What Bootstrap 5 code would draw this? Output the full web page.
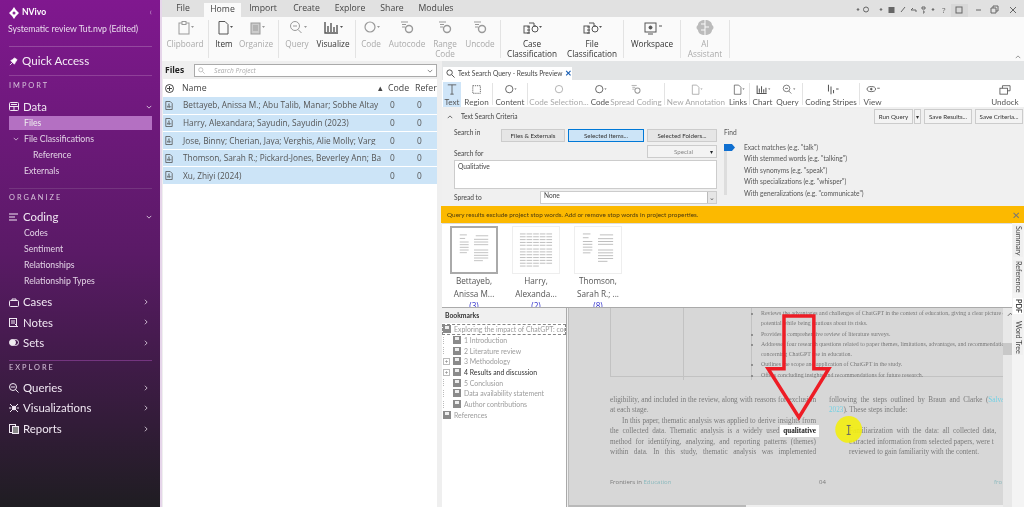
<!DOCTYPE html>
<html lang="en"><head><meta charset="utf-8"><title>NVivo</title>
<link rel="stylesheet" href="https://cdn.jsdelivr.net/npm/bootstrap@5.3.0/dist/css/bootstrap.min.css">
<style>
html,body{height:507px;overflow:hidden;background:#fff}
body{font-family:"Open Sans","Noto Sans",sans-serif;font-size:8.2px;color:#444;line-height:1.2}
.shot{width:1024px;height:507px;overflow:hidden;position:relative;filter:blur(.35px)}
svg{display:block;fill:none;stroke:currentColor;stroke-width:1}
/* sidebar */
.sb{width:160px;flex:none;height:507px;padding:0 8px 0 9px;background:linear-gradient(#80188f 0,#5a1a66 50%,#1f1d22 100%);color:#e9dcec;font-family:Lato,sans-serif}
.sb-head{height:47px;padding-top:5px;border-bottom:1px solid #94489f}
.brand{height:15px;font-weight:700;font-size:8.6px;color:#fff;margin-left:-1px;gap:2px}
.ptitle{font-size:8.7px;white-space:nowrap;margin-top:4px;margin-left:-1px;color:#eadcee}
.sb-q{height:29px;font-size:11.6px;color:#f4ecf5;border-bottom:1px solid #8f4099;gap:4px}
.sb-l{font-size:7.4px;letter-spacing:2px;color:#d7c4db;display:flex;align-items:center}
.h21{height:21px}.h18{height:18px}.h16{height:16px}
.sb-m{font-size:11.4px;color:#f1e8f3;gap:4px;height:18px;padding-top:1px}
.sb-m.t20{height:20.3px;padding-top:0}
.sb-m>span{flex:1}
.sb-s{height:16px;font-size:8.7px;padding-left:15px;color:#e3d3e6;display:flex;align-items:center}
.sb-s.on{background:#b470c2;height:14px;margin:1px 0;color:#eee}
.sb-s.d2{padding-left:24px}
.sb-s.ex{padding-left:4px;gap:5px}
.sb-r{border-top:1px solid #74357f}
.mt9{margin-top:9px}.mt3x{margin-top:3px}.mt7{margin-top:7px}.mt1x{margin-top:1px}
/* top */
.mainp{flex:1;min-width:0;height:507px;border-left:2px solid #e6d5ea;background:#efefef}
.strip{height:17px;background:#e1e1e1;font-size:8.7px;color:#444}
.tb{text-align:center;padding-top:3px;flex:none}
.tb.on{background:#fafafa;margin-top:3px;height:14px;padding-top:1px}
.rib{height:44px;background:#fafafa;position:relative}
.ri{display:flex;flex-direction:column;align-items:center;text-align:center;font-size:8.2px;line-height:10px;color:#aaa;padding-top:3px;flex:none}
.ri svg{height:15px;width:22px;margin-bottom:4px;color:#999}
.ri.en{color:#333}.ri.en svg{color:#555}
.rs{width:1px;background:#e3e3e3;margin:3px 0 3px;flex:none}
.w1{width:1px}.w2{width:2px}.w4{width:4px}.w5{width:5px}.w7{width:7px}.w18{width:18px}.w20{width:20px}.w22{width:22px}.w25{width:25px}
.w30{width:30px}.w31{width:31px}.w34{width:34px}.w36{width:36px}.w37{width:37px}.w39{width:39px}.w40{width:40px}.w42{width:42px}.w43{width:43px}.w44{width:44px}.w46{width:46px}.w48{width:48px}.w52{width:52px}.w56{width:56px}.w58{width:58px}.w62{width:62px}
.chev{position:absolute;right:3px;bottom:2px;color:#777}
/* work */
.work{height:446px;padding-left:1px}
.fp{width:274px;flex:none;height:446px;background:#fff}
.fp-h{height:18px;background:#efefef;padding-left:2px;gap:10px;padding-top:1px}
.fp-h b{font-size:8.5px;color:#222}
.fsearch{flex:1;height:13px;background:#fff;border:1px solid #aaa;font-style:italic;color:#aaa;font-size:6.6px;padding:0 3px;gap:9px}
.fsearch svg:last-child{margin-left:auto;color:#666}
.thd{height:18px;font-size:8.8px;color:#444}
.c0{width:19px;flex:none;padding-left:2px}
.cn{flex:1;overflow:hidden;white-space:nowrap;min-width:0}
.cc{width:27px;flex:none;padding-left:3px}
.cr{width:23px;flex:none;padding-left:1px}
.thd .cc{padding-left:1px}
.trow{height:16.6px;margin-bottom:1px;background:#cce4f7;font-size:8.3px;color:#555}
.trow .cn{padding-left:1px}
.trow .cr{padding-left:3px}
.gapx{width:5px;flex:none}
.rp{flex:1;min-width:0;height:446px}
.rtabs{height:19px;background:#e3e5e6;padding:6px 0 0 1px}
.rtab{width:129px;height:13px;background:#fff;font-family:Lato,sans-serif;font-size:6.6px;color:#444;gap:3px;padding:0 3px;white-space:nowrap}
.rtab svg{flex:none}
.rtab i{margin-left:auto;font-style:normal;color:#1a5fb4;font-weight:700;font-size:8px}
.tool{height:27px;background:#fff}
.ti{display:flex;flex-direction:column;align-items:center;font-family:Lato,sans-serif;font-size:8.1px;line-height:10px;color:#aaa;padding-top:2px;height:25px;margin-top:2px;white-space:nowrap;flex:none}
.ti svg{width:20px;height:13px;margin-bottom:2px;color:#999}
.ti.en{color:#555}.ti.en svg{color:#555}
.ti.sel{background:#cfe5f8;color:#555}
.ts{width:1px;background:#e3e3e3;height:22px;margin-top:3px;flex:none}
.crit{height:99px;background:#f0f0f0;display:grid;grid-template-columns:12px 47px 39px 177px 7px 300px;grid-template-rows:17px 5px 13px 3px 13px 2px 29px 2px 13px 2px;font-family:Lato,sans-serif;font-size:6.6px;color:#444}
.crit>*{min-width:0}
.g-top{grid-column:1/-1;grid-row:1;display:flex;align-items:center;padding:2px 1px 0 5px}
.btnx{border:1px solid #ccc;background:#e6e6e6;font-size:6.2px;color:#333;padding:0;height:13px;text-align:center;border-radius:0;line-height:11px;display:block;white-space:nowrap;font-family:inherit;flex:none}
.btnw{background:#f3f3f3;border-color:#ccc;height:15px}
.bsel{background:#cce4f7;border-color:#0078d7}
.m3{margin-left:3px}.m1{margin-left:1px}
.cell-in{grid-area:3/2}.cell-btn{grid-area:3/3/auto/5}.cell-for{grid-area:5/2;align-self:end}.cell-sp{grid-area:5/3/auto/5}.cell-tx{grid-area:7/2/auto/5}.cell-st{grid-area:9/2;align-self:center}.cell-sl{grid-area:9/4}
.sbtns{display:grid;grid-template-columns:64px 76px 70px;column-gap:3px}
.btnsp{width:70px;height:13px;background:#f3f3f3;color:#888;padding:0 3px 0 26px}
.txa{border:1px solid #ccc;background:#fff;padding:2px 3px}
.sel2{background:#fff;border:1px solid #ccc;padding-left:3px;position:relative}
.sel2 em{position:absolute;right:0;top:0;bottom:0;width:9px;background:#e6e6e6;border-left:1px solid #bbb;display:flex;align-items:center;justify-content:center;font-style:normal;color:#555}
.find{grid-column:6;grid-row:3/10;position:relative;color:#555}
.track{position:absolute;left:0;top:16px;width:3px;height:50px;background:#ddd}
.knob{position:absolute;left:0;top:15px;width:11px;height:7px;background:#0f6fd0;clip-path:polygon(0 0,72% 0,100% 50%,72% 100%,0 100%)}
.opts{padding-left:20px;padding-top:1px;line-height:11.5px;white-space:nowrap}
.warn{height:17px;background:#fcb900;font-family:Lato,sans-serif;font-size:6.4px;color:#4a3a10;padding:0 4px 0 6px;margin-left:-1px}
.thumbs{height:85px;background:#fff;border-top:1px solid #ddd;overflow:hidden;padding:2px 0 0 1px;border-bottom:1px solid #aaa;flex:none}
.tc{width:62px;text-align:center;font-size:8.2px;line-height:12.5px;color:#555;flex:none;white-space:nowrap}
.pg{width:48px;height:48px;margin:0 auto 1px;padding:4px 6px;border:1px solid #eee;color:#aaa;background:#fff}
.pg.on{border:2px solid #aaa}
.pg svg{width:100%;height:100%;stroke-width:.8}
.tc a{color:#33c;text-decoration:none;display:block}
.lower{height:199px}
.bm{width:125px;flex:none;background:#fff;border-right:1px solid #aaa;margin-right:1px;font-family:Lato,sans-serif;font-size:6.9px;color:#9c9c9c;white-space:nowrap;overflow:hidden}
.bm-h{height:15px;background:#f0f0f0;font-weight:700;color:#333;padding-left:3px;font-size:6.8px;margin-bottom:1px}
.bi{height:10.7px;display:flex;align-items:center;gap:3px;padding-left:1px;flex:none}
.bi u{width:8px;height:8px;background:#8a8a8a;display:block;flex:none;position:relative}
.bi u::after{content:"";position:absolute;left:2px;top:1px;width:4px;height:3px;background:#eee}
.bi s{width:7px;height:7px;flex:none;font-size:6px;line-height:7px;text-decoration:none;color:#777;text-align:center;border-left:1px dotted #bbb}
.bi s.pl{border:1px solid #bbb;line-height:5px}
.bi.dk{color:#333}
.bi.fst{outline:1px dashed #888;outline-offset:-1px}
.pdf{flex:1;min-width:0;background:#d7d7d7;position:relative;overflow:hidden;font-family:"Liberation Serif",serif;color:#7a7a7a;font-size:7.2px;border-left:1px solid #bbb}
.pt{display:grid;grid-template-columns:73px 68px 1fr;height:69px;margin:0 0 0 41px;border:1px solid #c2c2c2;border-top:0;width:395px}
.pt>div{border-right:1px solid #c2c2c2}
.pt ul{margin:0;padding:0 0 0 9px;font-size:5.9px;line-height:10.3px;white-space:nowrap;list-style:disc}
.cols{margin:18px 0 0 41px;gap:13px;line-height:10.4px;width:440px}
.cols>div{flex:none}
.lc{width:206px}.rc{width:200px;white-space:nowrap}
.j{text-align:justify;text-align-last:justify;display:block;white-space:nowrap;height:10.4px}
.ind{padding-left:12px}
.ind2{padding-left:20px}
.wsp{word-spacing:1.7px}
.hi{background:#fff;color:#222;display:inline-block;padding:0 3px;margin:-1px -3px;line-height:12px;font-weight:700;font-size:7.2px}
.foot{margin:22px 0 0 41px;font-family:"Open Sans",sans-serif;font-size:6px;width:430px}
.foot span{color:#8ab9bd}
.f1{width:209px;flex:none}.f2{width:175px;flex:none}
.overlay{position:absolute;inset:0;pointer-events:none}
.vsb{width:9px;background:#e8e8e8;flex:none;color:#555}
.vsb b{display:block;height:12px;background:#c8c8c8;margin-top:26px}
.rstrip{width:12px;background:#f4f4f4;flex:none;font-family:Lato,sans-serif;font-size:7.2px;color:#444;display:flex;flex-direction:column;padding-top:2px;gap:3px;align-items:center}
.rstrip span{writing-mode:vertical-rl;white-space:nowrap;background:#f0f0f0;padding:1px}
.rstrip .on{font-weight:700;background:#fff;margin:2px 0 3px}
.hsb{position:absolute;left:0;right:0;bottom:0;height:2px;background:#efefef}
.hsb b{display:block;width:177px;height:2px;background:#b9b9b9}
.x{color:#777;font-size:10px;font-weight:400}
</style></head>
<body>
<svg width="0" height="0" class="position-absolute">
<symbol id="i-clip" viewBox="0 0 22 15"><rect x="5" y="3" width="10" height="11"/><rect x="8" y="1.500" width="4" height="3" fill="#fafafa"/><path d="M17 6h3l-1.500 2z" fill="currentColor" stroke="none"/></symbol>
<symbol id="i-doc" viewBox="0 0 22 15"><path d="M6 1.500h6l3 3v9.500h-9z"/><path d="M17 6h3l-1.500 2z" fill="currentColor" stroke="none"/></symbol>
<symbol id="i-org" viewBox="0 0 22 15"><rect x="6" y="3" width="9" height="11" fill="#ccc"/><path d="M8 6h5M8 8h5M8 10h5"/><path d="M17 6h3l-1.500 2z" fill="currentColor" stroke="none"/></symbol>
<symbol id="i-q" viewBox="0 0 22 15"><circle cx="9" cy="6" r="4.500"/><path d="M12 9.500l3.500 3.500M7 6h4"/><path d="M18 6h3l-1.500 2z" fill="currentColor" stroke="none"/></symbol>
<symbol id="i-bars" viewBox="0 0 22 15"><path d="M3 2v11h13M6 12V6M9 12V3M12 12V7M15 12V5" stroke-width="1.400"/><path d="M18 6h3l-1.500 2z" fill="currentColor" stroke="none"/></symbol>
<symbol id="i-c" viewBox="0 0 22 15"><circle cx="10" cy="7" r="5" stroke-width="1.200"/><path d="M17 6h3l-1.500 2z" fill="currentColor" stroke="none"/></symbol>
<symbol id="i-ac" viewBox="0 0 22 15"><path d="M5 2h7M6 4.500h4M6 7h3"/><circle cx="13" cy="9" r="3.500" stroke-width="1.400"/></symbol>
<symbol id="i-cc" viewBox="0 0 22 15"><path d="M8 3h5v3h2M6 7h3M6 10h3M6 13h3"/><rect x="3" y="6" width="5" height="7"/><circle cx="14" cy="9" r="3"/><path d="M18 6h3l-1.500 2z" fill="currentColor" stroke="none"/></symbol>
<symbol id="i-ws" viewBox="0 0 22 15"><rect x="4" y="3" width="11" height="9"/><circle cx="9.500" cy="7.500" r="1.500" fill="currentColor"/><path d="M7 14h5M18 6h3"/></symbol>
<symbol id="i-ai" viewBox="0 0 22 15"><path d="M11 0C7 0 4 2 4 5c-2 1-2 4 0 5 0 3 3 5 7 5s7-2 7-5c2-1 2-4 0-5 0-3-3-5-7-5z" fill="#bbb" stroke="none"/><path d="M11 0v15M7 4h4M11 7h4M7 10h4" stroke="#fafafa"/></symbol>
<symbol id="i-pdf" viewBox="0 0 10 11"><path d="M1 .5h5.500l2.500 2.500v7.500h-8z"/><path d="M3 8l2-5 1 5-3-1h5" stroke-width=".7"/></symbol>
<symbol id="i-s" viewBox="0 0 10 10"><circle cx="4" cy="4" r="3"/><path d="M6.500 6.500l3 3"/></symbol>
<symbol id="i-cd" viewBox="0 0 8 5"><path d="M1 1l3 3 3-3"/></symbol>
<symbol id="i-cr" viewBox="0 0 5 8"><path d="M1 1l3 3-3 3"/></symbol>
<symbol id="i-cu" viewBox="0 0 8 5"><path d="M1 4l3-3 3 3"/></symbol>
<symbol id="i-pg1" viewBox="0 0 36 38"><path d="M2 2h8M20 3h14M2 6h6M18 7h16M2 10h10M18 10h16M2 13h10M18 13h16M2 16h10M18 19h16M2 19h10M18 22h16M2 22h8M18 25h16M18 28h16M18 31h10"/></symbol>
<symbol id="i-pg2" viewBox="0 0 36 38"><path d="M1 2h34M1 5h34M1 8h34M1 11h34M1 14h34M1 18h34M1 21h34M1 24h34M1 27h34M1 30h34M1 33h34M1 36h20" stroke-dasharray="6 1"/></symbol>
</svg>
<div class="shot d-flex">
<aside class="sb">
  <div class="sb-head">
    <div class="brand d-flex align-items-center"><svg width="12" height="12" viewBox="0 0 12 12" stroke="none"><path fill="#fff" stroke="none" d="M6 0l2 3 3 3-3 3-2 3-2-3-3-3 3-3z"/><circle cx="6" cy="6" r="1.500" fill="#8a2a98" stroke="none"/></svg>NVivo<span class="ms-auto fw-normal text-white-50">‹</span></div>
    <div class="ptitle">Systematic review Tut.nvp (Edited)</div>
  </div>
  <div class="sb-q d-flex align-items-center"><svg width="9" height="9" viewBox="0 0 10 10"><path d="M9 3L6 1 4 3 2 4l4 4 1-2zM4 6L1 9" fill="#fff"/></svg>Quick Access</div>
  <div class="sb-l h21">IMPORT</div>
  <div class="sb-m d-flex align-items-center"><svg width="10" height="9" viewBox="0 0 10 9"><rect x=".5" y=".5" width="9" height="8" rx="1"/><path d="M.5 4.500h9M5 4.500v4M2 2.500h6"/></svg><span>Data</span><svg width="6" height="4"><use href="#i-cd"/></svg></div>
  <div class="sb-s on">Files</div>
  <div class="sb-s ex"><svg width="6" height="4"><use href="#i-cd"/></svg>File Classifications</div>
  <div class="sb-s d2">Reference</div>
  <div class="sb-s">Externals</div>
  <div class="sb-r mt9"></div>
  <div class="sb-l h18">ORGANIZE</div>
  <div class="sb-m d-flex align-items-center"><svg width="10" height="8" viewBox="0 0 10 8" stroke-width="1.200"><path d="M0 1h9M0 4h6M0 7h8"/></svg><span>Coding</span><svg width="6" height="4"><use href="#i-cd"/></svg></div>
  <div class="sb-s">Codes</div>
  <div class="sb-s">Sentiment</div>
  <div class="sb-s">Relationships</div>
  <div class="sb-s">Relationship Types</div>
  <div class="sb-m t20 d-flex align-items-center mt3x"><svg width="10" height="9" viewBox="0 0 10 9"><rect x=".5" y="2.500" width="9" height="6" rx="1"/><path d="M3 2.500V1h4v1.500"/></svg><span>Cases</span><svg width="4" height="6" class="me-1"><use href="#i-cr"/></svg></div>
  <div class="sb-m t20 d-flex align-items-center"><svg width="10" height="9" viewBox="0 0 10 9"><rect x=".5" y=".5" width="7" height="8"/><path d="M2 3h4M2 5h4M6 6l3 3"/></svg><span>Notes</span><svg width="4" height="6" class="me-1"><use href="#i-cr"/></svg></div>
  <div class="sb-m t20 d-flex align-items-center"><svg width="10" height="7" viewBox="0 0 10 7"><circle cx="3.500" cy="3.500" r="3" fill="#eee"/><circle cx="6.500" cy="3.500" r="3"/></svg><span>Sets</span><svg width="4" height="6" class="me-1"><use href="#i-cr"/></svg></div>
  <div class="sb-r mt7"></div>
  <div class="sb-l h16">EXPLORE</div>
  <div class="sb-m t20 d-flex align-items-center mt1x"><svg width="10" height="10" viewBox="0 0 10 10"><circle cx="4" cy="4" r="3.500"/><path d="M6.500 6.500l3 3M2 4h4"/></svg><span>Queries</span><svg width="4" height="6" class="me-1"><use href="#i-cr"/></svg></div>
  <div class="sb-m t20 d-flex align-items-center"><svg width="10" height="10" viewBox="0 0 10 10"><circle cx="5" cy="5" r="1.800" fill="#eee"/><path d="M1 1l8 8M9 1L1 9M0 5h2M8 5h2"/></svg><span>Visualizations</span><svg width="4" height="6" class="me-1"><use href="#i-cr"/></svg></div>
  <div class="sb-m t20 d-flex align-items-center"><svg width="10" height="10" viewBox="0 0 10 10"><rect x=".5" y=".5" width="6" height="8"/><rect x="3.500" y="2.500" width="6" height="7" fill="#888"/></svg><span>Reports</span><svg width="4" height="6" class="me-1"><use href="#i-cr"/></svg></div>
</aside>
<main class="mainp">
  <div class="strip d-flex">
    <div class="tb w42">File</div><div class="tb on w37">Home</div><div class="tb w44">Import</div><div class="tb w43">Create</div><div class="tb w44">Explore</div><div class="tb w40">Share</div><div class="tb w48">Modules</div>
    <svg class="ms-auto" width="168" height="17" viewBox="0 0 168 17" color="#666"><circle cx="2" cy="9.500" r=".8" fill="currentColor"/><circle cx="10" cy="9.500" r="2.500"/><circle cx="25" cy="9.500" r=".8" fill="currentColor"/><rect x="33" y="7.500" width="5" height="5" fill="currentColor"/><path d="M45 12l4-5M57 8l-2 2h5v2M66 7h3v2h-3zM67 11h1v2h-1"/><circle cx="77" cy="9.500" r=".8" fill="currentColor"/><text x="86" y="12.500" font-size="8" fill="currentColor" stroke="none">?</text><rect x="95" y="4" width="17" height="13" fill="#d8d8d8" stroke="none"/><rect x="100" y="7" width="6" height="6"/><path d="M120 10h5M135 8h5v5h-5zM137 8V6h5v5h-2M154 7l6 6M160 7l-6 6"/></svg>
  </div>
  <div class="rib d-flex">
    <div class="ri w46"><svg><use href="#i-clip"/></svg>Clipboard</div><div class="rs"></div>
    <div class="ri en w30"><svg><use href="#i-doc"/></svg>Item</div>
    <div class="ri w34"><svg><use href="#i-org"/></svg>Organize</div><div class="w5"></div><div class="rs"></div>
    <div class="ri w36"><svg><use href="#i-q"/></svg>Query</div>
    <div class="ri en w36"><svg><use href="#i-bars"/></svg>Visualize</div><div class="w4"></div><div class="rs"></div>
    <div class="ri w30"><svg><use href="#i-c"/></svg>Code</div>
    <div class="ri w42"><svg><use href="#i-ac"/></svg>Autocode</div>
    <div class="ri w34"><svg><use href="#i-ac"/></svg>Range Code</div>
    <div class="ri w36"><svg><use href="#i-ac"/></svg>Uncode</div><div class="w2"></div><div class="rs"></div>
    <div class="ri en w62"><svg><use href="#i-cc"/></svg>Case Classification</div>
    <div class="ri en w58"><svg><use href="#i-cc"/></svg>File Classification</div><div class="w2"></div><div class="rs"></div>
    <div class="ri en w56"><svg><use href="#i-ws"/></svg>Workspace</div><div class="rs"></div>
    <div class="ri w48"><svg><use href="#i-ai"/></svg>AI<br>Assistant</div><div class="rs"></div>
    <svg class="chev" width="6" height="4"><use href="#i-cu"/></svg>
  </div>
  <div class="work d-flex">
    <section class="fp">
      <div class="fp-h d-flex align-items-center"><b>Files</b><div class="fsearch d-flex align-items-center"><svg width="7" height="7"><use href="#i-s"/></svg><span>Search Project</span><svg width="6" height="4"><use href="#i-cd"/></svg></div></div>
      <div class="thd d-flex align-items-center"><div class="c0"><svg width="9" height="9" viewBox="0 0 9 9"><circle cx="4.500" cy="4.500" r="4"/><path d="M4.500 2v5M2 4.500h5"/></svg></div><div class="cn d-flex">Name<span class="ms-auto me-1">▴</span></div><div class="cc">Code</div><div class="cr">Refer</div></div>
      <div class="trow d-flex align-items-center"><div class="c0"><svg width="8" height="9"><use href="#i-pdf"/></svg></div><div class="cn">Bettayeb, Anissa M.; Abu Talib, Manar; Sobhe Altay</div><div class="cc">0</div><div class="cr">0</div></div>
      <div class="trow d-flex align-items-center"><div class="c0"><svg width="8" height="9"><use href="#i-pdf"/></svg></div><div class="cn">Harry, Alexandara; Sayudin, Sayudin (2023)</div><div class="cc">0</div><div class="cr">0</div></div>
      <div class="trow d-flex align-items-center"><div class="c0"><svg width="8" height="9"><use href="#i-pdf"/></svg></div><div class="cn">Jose, Binny; Cherian, Jaya; Verghis, Alie Molly; Varg</div><div class="cc">0</div><div class="cr">0</div></div>
      <div class="trow d-flex align-items-center"><div class="c0"><svg width="8" height="9"><use href="#i-pdf"/></svg></div><div class="cn">Thomson, Sarah R.; Pickard-Jones, Beverley Ann; Ba</div><div class="cc">0</div><div class="cr">0</div></div>
      <div class="trow d-flex align-items-center"><div class="c0"><svg width="8" height="9"><use href="#i-pdf"/></svg></div><div class="cn">Xu, Zhiyi (2024)</div><div class="cc">0</div><div class="cr">0</div></div>
    </section>
    <div class="gapx"></div>
    <section class="rp">
      <div class="rtabs"><div class="rtab d-flex align-items-center"><svg width="9" height="9"><use href="#i-s"/></svg>Text Search Query - Results Preview<i>✕</i></div></div>
      <div class="tool d-flex">
        <div class="w1"></div>
        <div class="ti en sel w18"><svg viewBox="0 0 20 13"><path d="M5 1h10M10 1v11M8 12h4"/></svg>Text</div>
        <div class="ti en w31"><svg viewBox="0 0 20 13"><rect x="5" y="2" width="9" height="9" stroke-dasharray="1.500 1"/></svg>Region</div>
        <div class="ts"></div>
        <div class="ti en w34"><svg viewBox="0 0 22 15"><use href="#i-c"/></svg>Content</div>
        <div class="ts"></div>
        <div class="ti w62"><svg viewBox="0 0 22 15"><circle cx="11" cy="7" r="5"/></svg>Code Selection...</div>
        <div class="ti en w20"><svg viewBox="0 0 22 15"><use href="#i-c"/></svg>Code</div>
        <div class="ti w52"><svg viewBox="0 0 22 15"><use href="#i-ac"/></svg>Spread Coding</div>
        <div class="w2"></div><div class="ts"></div>
        <div class="ti w62"><svg viewBox="0 0 22 15"><use href="#i-doc"/></svg>New Annotation</div>
        <div class="ti en w22"><svg viewBox="0 0 22 15"><use href="#i-doc"/></svg>Links</div>
        <div class="ts"></div>
        <div class="ti en w25"><svg viewBox="0 0 22 15"><use href="#i-bars"/></svg>Chart</div>
        <div class="ti en w25"><svg viewBox="0 0 22 15"><use href="#i-q"/></svg>Query</div>
        <div class="w2"></div><div class="ts"></div>
        <div class="ti en w56"><svg viewBox="0 0 20 13"><path d="M7 1v8M10 3v9M13 7v4M16 6h3" stroke-width="1.200"/></svg>Coding Stripes</div>
        <div class="ts"></div>
        <div class="ti en w25"><svg viewBox="0 0 20 13"><ellipse cx="8" cy="6" rx="5" ry="3"/><circle cx="8" cy="6" r="1" fill="currentColor"/><path d="M15 5h3"/></svg>View</div>
        <div class="ti en ms-auto w30 me-1"><svg viewBox="0 0 20 13" color="#333"><rect x="4" y="5" width="9" height="7"/><path d="M7 5V2h9v6h-3"/></svg>Undock</div>
      </div>
      <div class="crit">
        <div class="g-top"><svg width="6" height="4" class="me-1"><use href="#i-cu"/></svg><span class="ms-1">Text Search Criteria</span>
          <button class="btnx btnw ms-auto w39">Run Query</button><button class="btnx btnw w7 m1">▾</button><button class="btnx btnw w48 m3">Save Results...</button><button class="btnx btnw w48 m3">Save Criteria...</button></div>
        <div class="cell-in">Search in</div>
        <div class="sbtns cell-btn"><button class="btnx">Files &amp; Externals</button><button class="btnx bsel">Selected Items...</button><button class="btnx">Selected Folders...</button></div>
        <div class="cell-for">Search for</div>
        <div class="d-flex justify-content-end cell-sp"><button class="btnx btnsp d-flex align-items-center">Special<span class="ms-auto text-dark">▾</span></button></div>
        <div class="txa cell-tx">Qualitative</div>
        <div class="cell-st">Spread to</div>
        <div class="sel2 cell-sl">None<em>⌄</em></div>
        <div class="find"><span class="position-absolute top-0">Find</span><span class="track"></span><span class="knob"></span>
          <div class="opts"><br>Exact matches (e.g. "talk")<br>With stemmed words (e.g. "talking")<br>With synonyms (e.g. "speak")<br>With specializations (e.g. "whisper")<br>With generalizations (e.g. "communicate")</div></div>
      </div>
      <div class="warn d-flex align-items-center"><span>Query results exclude project stop words. Add or remove stop words in project properties.</span><span class="ms-auto x">✕</span></div>
      <div class="d-flex">
        <div class="flex-fill overflow-hidden">
          <div class="thumbs d-flex">
            <div class="tc"><div class="pg on"><svg viewBox="0 0 36 38"><use href="#i-pg1"/></svg></div>Bettayeb,<br>Anissa M...<a href="#">(3)</a></div>
            <div class="tc"><div class="pg"><svg viewBox="0 0 36 38"><use href="#i-pg2"/></svg></div>Harry,<br>Alexanda...<a href="#">(2)</a></div>
            <div class="tc"><div class="pg"><svg viewBox="0 0 36 38"><use href="#i-pg1"/></svg></div>Thomson,<br>Sarah R.; ...<a href="#">(8)</a></div>
          </div>
          <div class="lower d-flex">
            <div class="bm">
              <div class="bm-h d-flex align-items-center">Bookmarks</div>
              <div class="bi fst"><u></u>Exploring the impact of ChatGPT: con</div>
              <div class="bi"><s></s><u></u>1 Introduction</div>
              <div class="bi"><s></s><u></u>2 Literature review</div>
              <div class="bi"><s class="pl">+</s><u></u>3 Methodology</div>
              <div class="bi dk"><s class="pl">+</s><u></u>4 Results and discussion</div>
              <div class="bi"><s></s><u></u>5 Conclusion</div>
              <div class="bi"><s></s><u></u>Data availability statement</div>
              <div class="bi"><s></s><u></u>Author contributions</div>
              <div class="bi"><u></u>References</div>
            </div>
            <div class="pdf">
              <div class="pt"><div></div><div></div><div class="border-0"><ul>
                <li>Reviews the advantages and challenges of ChatGPT in the context of education, giving a clear picture of its</li>
                <li class="list-unstyled">potential while being cautious about its risks.</li>
                <li>Provides a comprehensive review of literature surveys.</li>
                <li>Addresses four research questions related to paper themes, limitations, advantages, and recommendations</li>
                <li class="list-unstyled">concerning ChatGPT use in education.</li>
                <li>Outlines the scope and application of ChatGPT in the study.</li>
                <li>Offers concluding insights and recommendations for future research.</li>
              </ul></div></div>
              <div class="cols d-flex">
                <div class="lc">
                  <span class="j">eligibility, and included in the review, along with reasons for exclusion</span>
                  <span class="d-block">at each stage.</span>
                  <span class="j ind">In this paper, thematic analysis was applied to derive insights from</span>
                  <span class="j">the collected data. Thematic analysis is a widely used <b class="hi">qualitative</b></span>
                  <span class="j">method for identifying, analyzing, and reporting patterns (themes)</span>
                  <span class="j">within data. In this study, thematic analysis was implemented</span>
                </div>
                <div class="rc">
                  <span class="d-block wsp">following the steps outlined by Braun and Clarke (<span class="text-info opacity-50">Salvador,</span></span>
                  <span class="d-block"><span class="text-info opacity-50">2023</span>). These steps include:</span>
                  <span class="d-block">&nbsp;</span>
                  <span class="d-block ind2 wsp">Familiarization with the data: all collected data,</span>
                  <span class="d-block ind2">extracted information from selected papers, were t</span>
                  <span class="d-block ind2">reviewed to gain familiarity with the content.</span>
                </div>
              </div>
              <div class="foot d-flex"><div class="f1">Frontiers in <span>Education</span></div><div class="f2">04</div><div><span>fro</span></div></div>
              <div class="hsb"><b></b></div>
              <svg class="overlay" viewBox="0 0 436 199" preserveAspectRatio="none"><path d="M216 8h30v53h15l-30 49-31-49h16z" stroke="#ee1c25" stroke-width="3.500"/><circle cx="281" cy="122" r="13.500" fill="#f3ee10" fill-opacity=".9" stroke="none"/><path d="M279 118h4M281 118v9M279 127h4" stroke="#666"/></svg>
            </div>
            <div class="vsb"><svg width="7" height="5" class="mt-1 ms-1"><use href="#i-cu"/></svg><b></b></div>
          </div>
        </div>
        <div class="rstrip"><span>Summary</span><span>Reference</span><span class="on">PDF</span><span>Word Tree</span></div>
      </div>
    </section>
  </div>
</main>
</div>
</body></html>
